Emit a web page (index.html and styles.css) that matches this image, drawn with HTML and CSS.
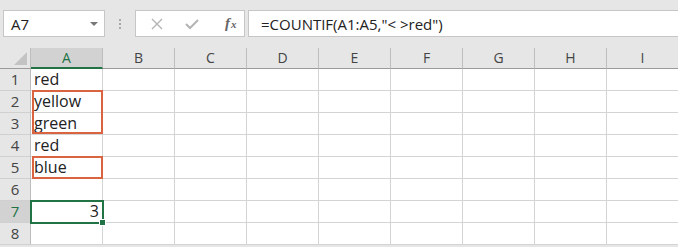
FILE: index.html
```html
<!DOCTYPE html>
<html lang="en">
<head>
    <meta charset="UTF-8">
    <title>COUNTIF not equal</title>
    <link rel="stylesheet" href="styles.css">
</head>
<body>
    <div class="formula-bar">
        <div class="name-box">
            <span>A7</span>
            <span class="drop"></span>
        </div>
        <div class="grip"><i></i><i></i><i></i></div>
        <div class="fx-buttons">
            <svg class="icon" width="12" height="12" viewBox="0 0 12 12">
                <path d="M1 1 L11 11 M11 1 L1 11" stroke="#b4b4b4" stroke-width="1.4" fill="none"/>
            </svg>
            <svg class="icon" width="14" height="12" viewBox="0 0 14 12">
                <path d="M1 6 L5 10 L13 2" stroke="#b4b4b4" stroke-width="2" fill="none"/>
            </svg>
            <span class="fx">f<sub>x</sub></span>
        </div>
        <div class="formula-input">=COUNTIF(A1:A5,"&lt; &gt;red")</div>
    </div>

    <div class="sheet">
        <div class="corner"><span></span></div>
        <div class="col-head active">A</div>
        <div class="col-head">B</div>
        <div class="col-head">C</div>
        <div class="col-head">D</div>
        <div class="col-head">E</div>
        <div class="col-head">F</div>
        <div class="col-head">G</div>
        <div class="col-head">H</div>
        <div class="col-head">I</div>
    </div>
    <div class="sheet rows" id="rows"></div>

    <script>
        // cell values for column A, row 7 holds the formula result
        const values = ['red', 'yellow', 'green', 'red', 'blue', '', '3', ''];
        const rows = document.getElementById('rows');

        values.forEach((val, i) => {
            const head = document.createElement('div');
            head.className = 'row-head' + (i === 6 ? ' active' : '');
            head.textContent = i + 1;
            rows.appendChild(head);

            for (let c = 0; c < 9; c++) {
                const cell = document.createElement('div');
                cell.className = 'cell';
                if (c === 0) {
                    cell.textContent = val;
                    if (/^\d+$/.test(val)) cell.classList.add('num');
                }
                rows.appendChild(cell);
            }
        });

        // highlight boxes and the active cell sit over the grid
        const marks = [
            ['mark red-box', 'box-a2'],
            ['mark red-box', 'box-a5'],
            ['mark selection', 'box-a7']
        ];
        marks.forEach(([cls, pos]) => {
            const m = document.createElement('div');
            m.className = cls + ' ' + pos;
            rows.appendChild(m);
        });
    </script>
</body>
</html>
```

FILE: styles.css
```css
body {
    margin: 0;
    background: #e6e6e6;
    font-family: "Open Sans", "Noto Sans", Arial, sans-serif;
    color: #222;
    width: 678px;
    height: 247px;
    overflow: hidden;
}

.formula-bar {
    display: flex;
    align-items: stretch;
    height: 27px;
    margin-top: 10px;
    padding-left: 3px;
}

.name-box {
    background: #fff;
    border: 1px solid #c6c6c6;
    box-sizing: border-box;
    width: 102px;
    display: flex;
    align-items: center;
    justify-content: space-between;
    padding: 0 6px 0 7px;
    font-size: 15px;
}

.drop {
    width: 0;
    height: 0;
    border-left: 4px solid transparent;
    border-right: 4px solid transparent;
    border-top: 4px solid #777;
}

.grip {
    width: 30px;
    display: flex;
    flex-direction: column;
    align-items: center;
    justify-content: center;
    gap: 2px;
}

.grip i {
    width: 2px;
    height: 2px;
    background: #a8a8a8;
}

.fx-buttons {
    width: 110px;
    box-sizing: border-box;
    background: #fff;
    border: 1px solid #c6c6c6;
    display: flex;
    align-items: center;
    padding-left: 15px;
}

.fx-buttons .icon {
    margin-right: 22px;
}

.fx-buttons .icon + .icon {
    margin-right: 26px;
}

.fx {
    font-family: "Liberation Serif", serif;
    font-style: italic;
    font-size: 15px;
    color: #666;
    font-weight: bold;
}

.fx sub {
    font-size: 11px;
    vertical-align: 0;
    margin-left: 1px;
}

.formula-input {
    flex: 1;
    margin-left: 3px;
    background: #fff;
    border: 1px solid #c6c6c6;
    border-right: none;
    display: flex;
    align-items: center;
    padding-left: 12px;
    font-size: 15px;
}

.sheet {
    display: grid;
    grid-template-columns: 31px repeat(9, 72px);
    margin-top: 11px;
}

.sheet.rows {
    margin-top: 0;
    grid-auto-rows: 22px;
    position: relative;
    background: #fff;
}

.corner {
    height: 21px;
    border-bottom: 1px solid #9b9b9b;
    border-right: 1px solid #bdbdbd;
    box-sizing: border-box;
    position: relative;
}

.corner span {
    position: absolute;
    right: 3px;
    bottom: 3px;
    width: 0;
    height: 0;
    border-left: 13px solid transparent;
    border-bottom: 13px solid #c3c3c3;
}

.col-head {
    height: 21px;
    box-sizing: border-box;
    border-bottom: 1px solid #9b9b9b;
    border-right: 1px solid #bdbdbd;
    text-align: center;
    font-size: 14px;
    line-height: 20px;
    color: #444;
}

.col-head.active {
    background: #d2d2d2;
    color: #217346;
    border-bottom: 2px solid #217346;
}

.row-head {
    background: #e6e6e6;
    border-bottom: 1px solid #d0d0d0;
    border-right: 1px solid #bdbdbd;
    text-align: center;
    font-size: 15px;
    line-height: 21px;
    color: #444;
}

.row-head.active {
    background: #d2d2d2;
    color: #217346;
}

.cell {
    border-bottom: 1px solid #d4d4d4;
    border-right: 1px solid #d4d4d4;
    font-size: 16px;
    line-height: 21px;
    padding: 0 3px;
    white-space: nowrap;
}

.cell.num {
    text-align: right;
}

.mark {
    position: absolute;
    box-sizing: border-box;
    pointer-events: none;
}

.red-box {
    border: 2px solid #d9643f;
    left: 32px;
    width: 71px;
}

.box-a2 {
    top: 21px;
    height: 44px;
}

.box-a5 {
    top: 87px;
    height: 23px;
}

.selection {
    border: 2px solid #217346;
    left: 30px;
    width: 74px;
    top: 131px;
    height: 24px;
}

.selection::after {
    content: "";
    position: absolute;
    right: -4px;
    bottom: -4px;
    width: 5px;
    height: 5px;
    background: #217346;
    border: 1px solid #fff;
}
```
